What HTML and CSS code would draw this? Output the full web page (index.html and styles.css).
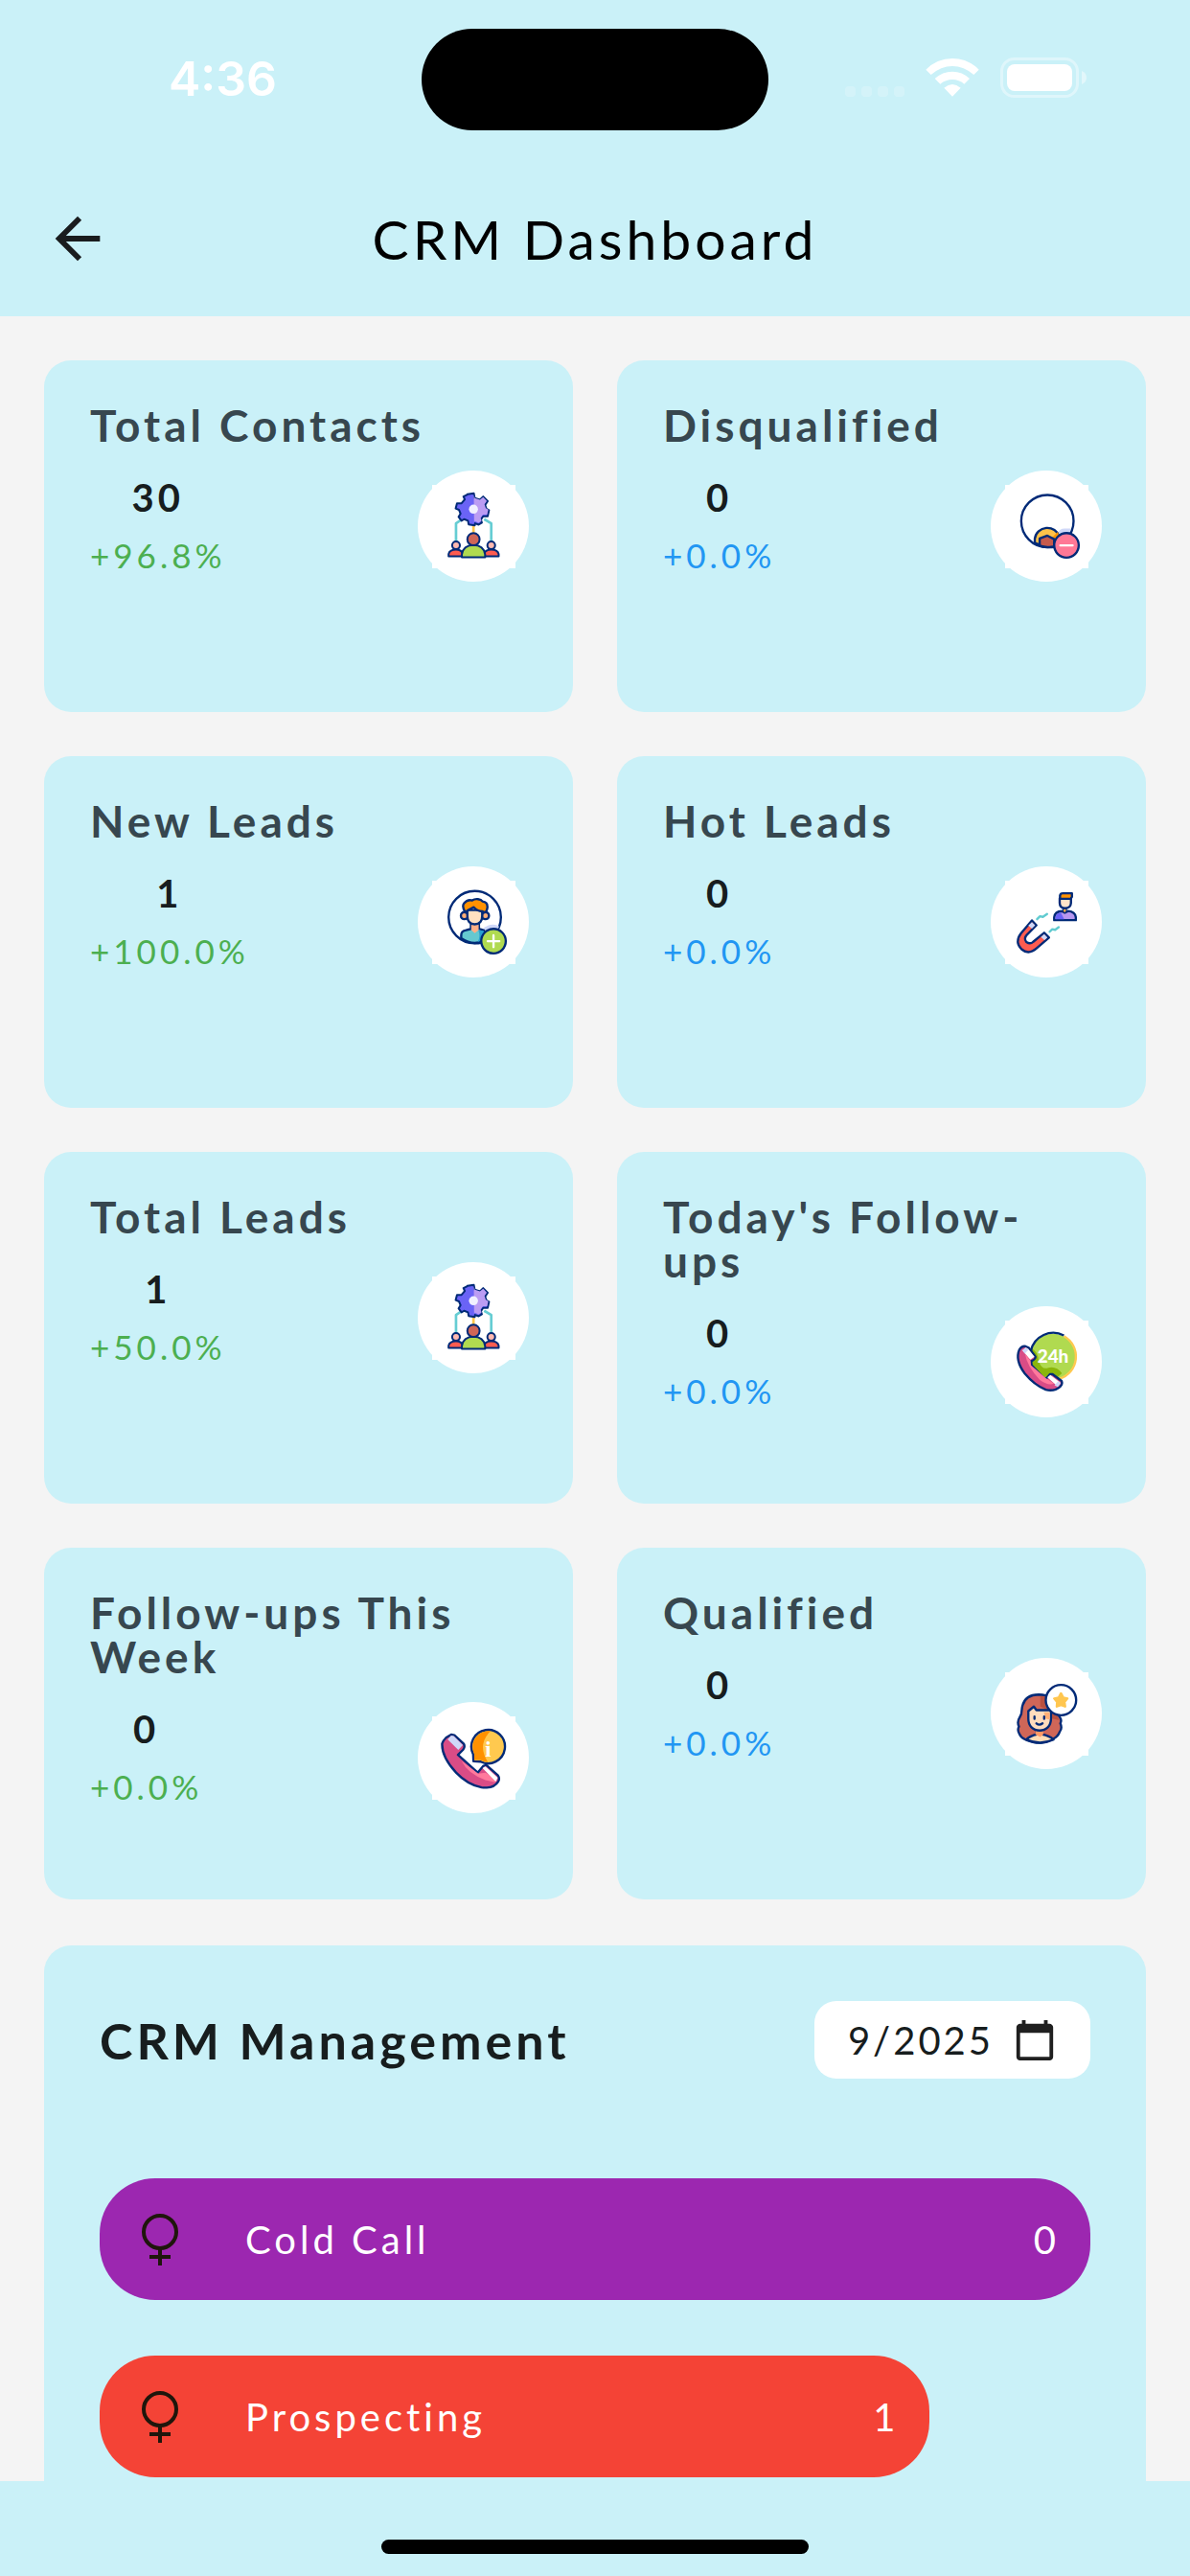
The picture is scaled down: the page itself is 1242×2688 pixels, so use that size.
FILE: index.html
```html
<!DOCTYPE html>
<html lang="en">
<head>
<meta charset="utf-8">
<meta name="viewport" content="width=device-width, initial-scale=1">
<title>CRM Dashboard</title>
<link rel="stylesheet" href="styles.css">
</head>
<body>
<svg class="sprite" aria-hidden="true">
  <symbol id="team" viewBox="91 78 258 258">
    <g stroke="#002a77" stroke-width="6" stroke-linejoin="round">
      <path d="M165 252V197L184 184M274 252V197L252 184" fill="none" stroke="#66cdd3" stroke-width="8"/>
      <path d="M219 226V200" stroke="#ffc64a" stroke-width="8"/>
      <path d="M200 107l20-3 3 15 16 5 10-10 14 14-8 12 4 12 8 4-4 19-14 0-7 10 3 10-10 6-11-4-1 6-19-3-2-11-12-5-8 5-9-12 6-10-5-12-10-4 4-16 14 0 10-12-4-9 12-6z" fill="#6a63f6"/>
      <path d="M220 107l3 12 16 5 10-8 11 12-7 10 4 12 8 4-4 16-13 0-7 10 3 9-9 6-12-5-2 4z" fill="#bb9cf3" stroke="none"/>
      <circle cx="219" cy="153" r="14" fill="#f1f0ff" stroke="none"/>
      <path d="M142 299v-7c2-10 12-14 23-14s18 3 21 14v7zM252 299v-7c2-10 11-14 22-14s21 4 23 14v7z" fill="#ff5c50"/>
      <circle cx="165" cy="265" r="12" fill="#ffb9b0"/><circle cx="274" cy="265" r="12" fill="#ffb9b0"/>
      <path d="M183 302v-9c3-19 17-29 36-29s33 10 36 29v9z" fill="#b0da50"/>
      <circle cx="219" cy="246" r="19" fill="#cf6657"/>
    </g>
  </symbol>
</svg>

<header class="top">
  <div class="status">
    <time class="clock">4:36</time>
    <div class="island"></div>
    <div class="signals">
      <svg class="dots" viewBox="0 0 62 42" aria-hidden="true"><g fill="#fff" opacity=".2"><rect y="30" width="11" height="11" rx="4"/><rect x="17" y="30" width="11" height="11" rx="4"/><rect x="34" y="30" width="11" height="11" rx="4"/><rect x="51" y="30" width="11" height="11" rx="4"/></g></svg>
      <svg class="wifi" viewBox="0 0 168 126" aria-hidden="true"><g fill="#fff"><path d="M1 38Q36 3 84 3T167 38L151 54Q120 27 84 27T17 54z"/><path d="M29 66Q53 44 84 44T138 66L121 83Q105 69 84 69T46 83z"/><path d="M58 95Q84 73 110 95L84 122z"/></g></svg>
      <svg class="battery" viewBox="0 0 90 42" aria-hidden="true"><rect x="1.500" y="1.500" width="79" height="39" rx="13" fill="none" stroke="#fff" stroke-width="3" opacity=".4"/><rect x="7" y="7" width="68" height="28" rx="8" fill="#fff"/><path d="M85 14q5 2 5 7t-5 7z" fill="#fff" opacity=".45"/></svg>
    </div>
  </div>
  <div class="appbar">
    <button class="back" type="button" aria-label="Back"><svg viewBox="0 0 24 24" aria-hidden="true"><path d="M20 11H7.830l5.590-5.590L12 4l-8 8 8 8 1.410-1.410L7.830 13H20z" fill="#1a1c1e"/></svg></button>
    <h1>CRM Dashboard</h1>
  </div>
</header>

<main>
  <section class="cards">
    <article class="card">
      <h2>Total Contacts</h2>
      <div class="row">
        <div class="stat"><span class="value">30</span><span class="up">+96.8%</span></div>
        <div class="badge"><svg aria-hidden="true"><use href="#team"/></svg></div>
      </div>
    </article>

    <article class="card">
      <h2>Disqualified</h2>
      <div class="row">
        <div class="stat"><span class="value">0</span><span class="flat">+0.0%</span></div>
        <div class="badge"><svg viewBox="84 78 258 258" aria-hidden="true"><g stroke="#002a77" stroke-width="7" stroke-linejoin="round">
          <path d="M248 227q4-14 20-14h19l-4 16z" fill="#cfd8f8" stroke="none"/>
          <path d="M176 257V244a39 38 0 0 1 76-6L240 270H206z" fill="#ffc24a"/>
          <path d="M230 240l17-17 5 14-12 10z" fill="#ff9500" stroke="none"/>
          <path d="M191 266V244l24-9 21 11v24q-22 4-45-4z" fill="#c65a4c"/>
          <circle cx="215" cy="190" r="81" fill="none"/>
          <circle cx="274" cy="265" r="38" fill="#ff7896"/>
          <path d="M255 265h38" stroke="#fff" stroke-linecap="round"/>
        </g></svg></div>
      </div>
    </article>

    <article class="card">
      <h2>New Leads</h2>
      <div class="row">
        <div class="stat"><span class="value">1</span><span class="up">+100.0%</span></div>
        <div class="badge"><svg viewBox="91 89 258 258" aria-hidden="true"><g stroke="#002a77" stroke-width="7" stroke-linejoin="round">
          <circle cx="223" cy="202" r="81" fill="#fff"/>
          <path d="M248 240q8-14 30-15 18 1 20 6l-6 14z" fill="#cfd8f8" stroke="none"/>
          <path d="M181 267v-9q0-14 15-16l15-4V220h25v18l16 5-6 34q-32 13-65-10z" fill="#65c8d0"/>
          <path d="M238 242l14 3-4 28-16 6q10-18 2-37z" fill="#289fd0" stroke="none"/>
          <path d="M212 222v20l11 9 12-9V222z" fill="#ffae86" stroke="none"/>
          <circle cx="191" cy="197" r="11" fill="#ffae76"/><circle cx="256" cy="197" r="11" fill="#ffae76"/>
          <path d="M200 180h46v19c0 15-8 25-23 25s-23-10-23-25z" fill="#ffe0c1"/>
          <path d="M194 187q-12-18-4-28 10-13 25-9 7-5 18-4 10 1 14 7 17 2 15 20-1 10-8 14l-7-3q-18-1-27-13l-18 9z" fill="#ff9100"/>
          <circle cx="281" cy="276" r="38" fill="#b0da50"/>
          <path d="M263 276h36M281 258v36" stroke="#fff" stroke-linecap="round"/>
        </g></svg></div>
      </div>
    </article>

    <article class="card">
      <h2>Hot Leads</h2>
      <div class="row">
        <div class="stat"><span class="value">0</span><span class="flat">+0.0%</span></div>
        <div class="badge"><svg viewBox="84 89 258 258" aria-hidden="true"><g stroke="#002a77" stroke-width="7" stroke-linejoin="round">
          <path d="M167 212l14 15-30 30q-10 11-1 22 12 8 21-1l34-28 15 15-38 33q-25 22-47 3-22-22-2-49z" fill="#ff5c50"/>
          <path d="M167 217l10 10-10 10-11-9zM205 254l10 11-9 8-11-10z" fill="#cfd8f8" stroke="none"/>
          <path d="M183 208l9-9 9 2 13-9M222 247l8-8 9 2 11-8" fill="none" stroke="#60cbd0" stroke-linecap="round"/>
          <path d="M236 211v-9q2-18 24-19l9 5 10-5q22 2 24 19v9z" fill="#b797f0"/>
          <path d="M240 208v-7q3-11 16-14l11 21z" fill="#6a63f6" stroke="none"/>
          <path d="M263 176h12l-2 9-4 4-5-4z" fill="#ffae46" stroke-width="3"/>
          <path d="M253 144h35v14q-1 16-18 16t-17-16z" fill="#ffe4ca"/>
          <path d="M254 145v-10q1-7 9-7h28v11l-4 6z" fill="#ff9100"/>
        </g></svg></div>
      </div>
    </article>

    <article class="card">
      <h2>Total Leads</h2>
      <div class="row">
        <div class="stat"><span class="value">1</span><span class="up">+50.0%</span></div>
        <div class="badge"><svg aria-hidden="true"><use href="#team"/></svg></div>
      </div>
    </article>

    <article class="card">
      <h2>Today's Follow-ups</h2>
      <div class="row">
        <div class="stat"><span class="value">0</span><span class="flat">+0.0%</span></div>
        <div class="badge"><svg viewBox="84 89 258 258" aria-hidden="true"><g stroke="#002a77" stroke-width="7" stroke-linejoin="round" fill="none">
          <circle cx="232" cy="200" r="70" fill="#b0da50" stroke="none"/>
          <path d="M164 210V175q22 8 24 40 10 28 30 20 25-6 42 17-25 26-59 16-34-18-37-58z" fill="#8bb60b" stroke="none"/>
          <path d="M266 137a72 72 0 0 1-14 132" stroke="#ffc94f"/>
          <path d="M164 182a71 71 0 0 1 102-47"/>
          <path d="M148 169l9 4 21 28q1 7-13 14l1 12 38 40 8 1 11-13 8 0 28 21q4 8-4 17-18 16-45 10-35-14-65-50-31-42-17-74 9-13 20-10z" fill="#d94c86"/>
          <path d="M146 192q5 37 45 80 26 20 45 12l-25-16-47-41-1-13z" fill="#ff799c" stroke="none"/>
          <path d="M148 173l7 3 20 25-13 9-24-28zM215 265l9-8 31 24-8 12z" fill="#fff" stroke="none"/>
          <path d="M148 173l9 6-12 12-8-10zM249 276l7 7-9 11-10-5z" fill="#cfd8f8" stroke="none"/>
        </g><text class="hours" x="184" y="219">24h</text></svg></div>
      </div>
    </article>

    <article class="card">
      <h2>Follow-ups This Week</h2>
      <div class="row">
        <div class="stat"><span class="value">0</span><span class="up">+0.0%</span></div>
        <div class="badge"><svg viewBox="91 99 258 258" aria-hidden="true"><g stroke="#002a77" stroke-width="7" stroke-linejoin="round">
          <path d="M150 155l10 2 29 27q5 9-2 18l-16 16 61 55 18-21 9-2 36 32q6 9 1 18-14 23-52 19-43-8-79-46-45-49-43-90 3-9 12-18z" fill="#d94c86"/>
          <path d="M182 237q20 40 74 59l29 7 6-8-35-22-22 3z" fill="#ff799c" stroke="none"/>
          <path d="M150 158l8 2 28 28-14 15-33-33z" fill="#cfd8f8" stroke="none"/><path d="M247 259l9-5 38 35-6 12z" fill="#fff" stroke="none"/>
          <path d="M219 238l-1-22a52 52 0 1 1 23 23z" fill="#ffc94f"/>
          <path d="M222 234l-1-20q-12-29 8-53 16-18 43-17-43 43-8 97-13-1-24-7z" fill="#ff9100" stroke="none"/>
        </g><text class="info" x="264" y="224">i</text></svg></div>
      </div>
    </article>

    <article class="card">
      <h2>Qualified</h2>
      <div class="row">
        <div class="stat"><span class="value">0</span><span class="flat">+0.0%</span></div>
        <div class="badge"><svg viewBox="84 96 258 258" aria-hidden="true"><g stroke="#002a77" stroke-width="7" stroke-linejoin="round">
          <path d="M136 210q5-45 52-45 55 2 57 49 0 12 7 19 9 10 3 21 7 15-2 26-8 25-57 34h-15q-46-8-53-28-7-12-1-22-7-14 2-28 7-10 7-26z" fill="#cf6658"/>
          <path d="M193 170q24 0 33 16l25 58-24-6-2-22-32-14z" fill="#b9503f" stroke="none"/>
          <path d="M150 304q12-12 32-16v-15h17v15q22 4 35 16-42 20-84 0z" fill="#ffdcb5"/>
          <path d="M179 276h24l-1 13-9 7-15-7z" fill="#ff9a66" stroke="none"/>
          <path d="M156 216l17-14 8 11h45v27c0 22-14 36-35 36s-35-14-35-36z" fill="#ffdcbd"/>
          <path d="M204 220h18v22l-12-2z" fill="#ffae76" stroke="none"/>
          <path d="M175 233v7M205 233v7M181 254q9 8 19 0" fill="none" stroke-linecap="round"/>
          <circle cx="257" cy="182" r="47" fill="#fff"/>
          <path d="M257 161l7 13 13 3-9 11 2 14-13-5-13 5 1-14-9-11 14-3z" fill="#ffc64f" stroke="#ffc64f"/>
        </g></svg></div>
      </div>
    </article>
  </section>

  <section class="management">
    <div class="management-head">
      <h2>CRM Management</h2>
      <button class="month" type="button">9/2025<svg viewBox="0 0 24 24" aria-hidden="true"><path d="M20 3h-1V1h-2v2H7V1H5v2H4c-1.100 0-2 .9-2 2v16c0 1.100.9 2 2 2h16c1.100 0 2-.9 2-2V5c0-1.100-.9-2-2-2zm0 18H4V8h16v13z" fill="#1f1f1f"/></svg></button>
    </div>
    <ul class="stages">
      <li class="stage cold" style="width:100%">
        <svg viewBox="0 0 40 56" aria-hidden="true"><g fill="none" stroke="#1f160c" stroke-width="4"><circle cx="20" cy="20" r="17"/><path d="M20 37v18M9 46h22"/></g></svg>
        <span class="name">Cold Call</span><span>0</span>
      </li>
      <li class="stage prospecting" style="width:83.800%">
        <svg viewBox="0 0 40 56" aria-hidden="true"><g fill="none" stroke="#1f160c" stroke-width="4"><circle cx="20" cy="20" r="17"/><path d="M20 37v18M9 46h22"/></g></svg>
        <span class="name">Prospecting</span><span>1</span>
      </li>
    </ul>
  </section>
</main>

<footer class="home"><div class="handle"></div></footer>
</body>
</html>
```

FILE: styles.css
```css
* { box-sizing: border-box; }

body {
  margin: 0;
  height: 100vh;
  display: flex;
  flex-direction: column;
  background: #f4f4f4;
  color: #171d1e;
  font-family: Lato, "Open Sans", sans-serif;
  letter-spacing: 4px;
}

h1, h2, ul { margin: 0; padding: 0; }
button { border: 0; font: inherit; letter-spacing: inherit; color: inherit; }
svg { display: block; flex: none; }
.sprite { position: absolute; width: 0; height: 0; }

.top { flex: none; background: #caf1f8; }

.status {
  height: 168px;
  padding: 30px 108px 0;
  display: grid;
  grid-template-columns: 1fr auto 1fr;
  align-items: start;
}
.clock {
  justify-self: start;
  padding: 22px 68px 0;
  font: 600 50px/60px Inter, sans-serif;
  letter-spacing: 0;
  color: #fff;
}
.island { width: 362px; height: 106px; border-radius: 53px; background: #000; }
.signals { justify-self: end; display: flex; gap: 22px; padding-top: 30px; }
.dots { width: 62px; height: 42px; }
.wifi { width: 56px; height: 42px; }
.battery { width: 90px; height: 42px; }

.appbar {
  height: 162px;
  padding: 0 46px;
  display: grid;
  grid-template-columns: 70px 1fr 70px;
  align-items: center;
}
.back { padding: 0; background: none; }
.back svg { width: 70px; height: 70px; }
h1 {
  text-align: center;
  font-size: 57px;
  line-height: 70px;
  font-weight: 400;
  color: #000;
}

main { flex: 1; min-height: 0; overflow: hidden; padding: 46px; }

.cards {
  display: grid;
  grid-template-columns: 1fr 1fr;
  grid-auto-rows: minmax(367px, auto);
  gap: 46px;
}
.card { padding: 45px 46px 45px 48px; border-radius: 28px; background: #caf1f8; }
.card h2 {
  font-size: 46px;
  line-height: 46px;
  font-weight: 700;
  color: #37474f;
}
.row {
  margin-top: 22px;
  display: flex;
  justify-content: space-between;
  align-items: center;
}
.stat { display: flex; flex-direction: column; align-items: center; }
.value { font-size: 40px; line-height: 60px; font-weight: 700; }
.up, .flat { font-size: 35px; line-height: 60px; }
.up { color: #4caf50; }
.flat { color: #2196f3; }

.badge {
  width: 116px;
  height: 116px;
  display: grid;
  place-items: center;
  border-radius: 50%;
  background: #fff;
}
.badge svg { width: 87px; height: 87px; background: #fff; }
.hours { font: 900 56px Lato, sans-serif; letter-spacing: 0; fill: #fff; }
.info { font: 700 66px "Liberation Serif", serif; letter-spacing: 0; fill: #fff; text-anchor: middle; }

.management {
  margin-top: 48px;
  padding: 58px;
  border-radius: 28px;
  background: #caf1f8;
}
.management-head { display: flex; justify-content: space-between; align-items: center; }
.management h2 { font-size: 52px; line-height: 80px; font-weight: 700; }
.month {
  height: 81px;
  padding: 0 35px;
  display: flex;
  align-items: center;
  gap: 20px;
  border-radius: 23px;
  background: #fff;
  font-size: 40px;
  letter-spacing: 3px;
}
.month svg { width: 46px; height: 46px; }

.stages { margin-top: 104px; display: grid; gap: 58px; list-style: none; }
.stage {
  height: 127px;
  padding: 0 32px 0 43px;
  display: flex;
  align-items: center;
  border-radius: 58px;
  color: #fff;
  font-size: 40px;
}
.stage svg { width: 40px; height: 56px; }
.name { flex: 1; padding-left: 69px; }
.cold { background: #9c27b0; }
.prospecting { background: #f44336; }

.home {
  flex: none;
  height: 99px;
  padding-top: 61px;
  background: #caf1f8;
}
.handle { width: 446px; height: 15px; margin: 0 auto; border-radius: 8px; background: #000; }
```
